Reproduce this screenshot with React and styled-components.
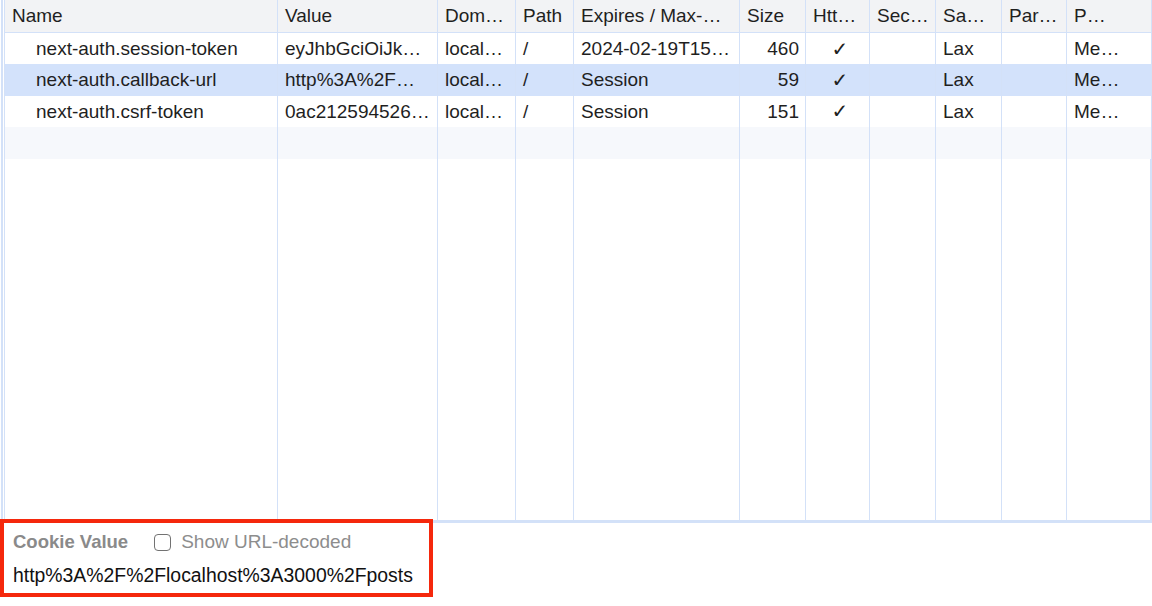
import React from "react"
import styled, { createGlobalStyle } from "styled-components"

const GlobalStyle = createGlobalStyle`
  html, body {
    margin: 0;
    padding: 0;
    background: #ffffff;
  }
  body {
    font-family: "Liberation Sans", Arial, "DejaVu Sans", sans-serif;
    color: #1f1f1f;
  }
`

const LINE = "#d3e1f8"

const Page = styled.div`
  width: 1152px;
  height: 606px;
  display: flex;
  flex-direction: column;
  overflow: hidden;
`

const GridArea = styled.div`
  height: 523px;
  box-sizing: border-box;
  margin-left: 1px;
  padding-left: 1px;
  border-left: 2px solid ${LINE};
  border-right: 2px solid ${LINE};
  border-bottom: 3px solid ${LINE};
  display: flex;
`

const Table = styled.table`
  width: 100%;
  height: 100%;
  table-layout: fixed;
  border-collapse: collapse;
  font-size: 19px;
`

const HeadCell = styled.th`
  height: 32px;
  padding: 0 4px 0 7px;
  background: #f2f3f5;
  border-left: 1px solid ${LINE};
  border-bottom: 1px solid ${LINE};
  font-weight: normal;
  text-align: left;
  white-space: nowrap;
  overflow: hidden;
  color: #1f1f1f;
`

const Row = styled.tr`
  height: 31.5px;
  background: ${p => (p.$selected ? "#d3e2fb" : p.$striped ? "#f6f8fc" : "#ffffff")};
`

const Cell = styled.td`
  padding: 1px ${p => (p.$align === "right" ? "6px" : "2px")} 0
    ${p => (p.$indent ? "31px" : "7px")};
  border-left: 1px solid ${LINE};
  text-align: ${p => p.$align || "left"};
  white-space: nowrap;
  overflow: hidden;
  line-height: 22px;
`

const Filler = styled.tr`
  height: auto;
  td {
    border-left: 1px solid ${LINE};
  }
`

const Check = styled.span`
  font-family: "DejaVu Sans", sans-serif;
  font-size: 20px;
  font-weight: bold;
`

const Panel = styled.div`
  position: relative;
  margin-top: -4px;
  width: 433px;
  height: 78px;
  box-sizing: border-box;
  border: 4px solid #f5280c;
  background: #ffffff;
  padding: 8px 0 0 9px;
  font-size: 18.5px;
  line-height: 22px;
`

const LabelRow = styled.div`
  display: flex;
  align-items: center;
  height: 22px;
`

const Label = styled.span`
  font-weight: bold;
  color: #8a8a8a;
`

const Box = styled.span`
  display: inline-block;
  width: 15px;
  height: 15px;
  margin-left: 26px;
  border: 1.6px solid #727272;
  border-radius: 4px;
`

const Decoded = styled.span`
  margin-left: 10px;
  font-size: 19px;
  color: #8d8d8d;
`

const Value = styled.div`
  margin-top: 11px;
  font-size: 19.4px;
  color: #111111;
`

const columns = [
  { title: "Name", width: 273 },
  { title: "Value", width: 160 },
  { title: "Dom…", width: 78 },
  { title: "Path", width: 58 },
  { title: "Expires / Max-…", width: 166 },
  { title: "Size", width: 66 },
  { title: "Htt…", width: 64 },
  { title: "Sec…", width: 66 },
  { title: "Sa…", width: 66 },
  { title: "Par…", width: 65 },
  { title: "P…", width: 84 },
]

const cookies = [
  { name: "next-auth.session-token", value: "eyJhbGciOiJk…", expires: "2024-02-19T15…", size: 460 },
  { name: "next-auth.callback-url", value: "http%3A%2F…", expires: "Session", size: 59, selected: true },
  { name: "next-auth.csrf-token", value: "0ac212594526…", expires: "Session", size: 151 },
]

const App = () => {
  return (
    <React.Fragment>
      <GlobalStyle />
      <Page>
        <GridArea>
          <Table>
            <colgroup>
              {columns.map(c => (
                <col key={c.title} style={{ width: c.width }} />
              ))}
            </colgroup>
            <thead>
              <tr>
                {columns.map(c => (
                  <HeadCell key={c.title}>{c.title}</HeadCell>
                ))}
              </tr>
            </thead>
            <tbody>
              {cookies.map(c => (
                <Row key={c.name} $selected={c.selected}>
                  <Cell $indent>{c.name}</Cell>
                  <Cell>{c.value}</Cell>
                  <Cell>local…</Cell>
                  <Cell>/</Cell>
                  <Cell>{c.expires}</Cell>
                  <Cell $align="right">{c.size}</Cell>
                  <Cell $align="center"><Check>✓</Check></Cell>
                  <Cell></Cell>
                  <Cell>Lax</Cell>
                  <Cell></Cell>
                  <Cell>Me…</Cell>
                </Row>
              ))}
              <Row $striped>
                {columns.map(c => (
                  <Cell key={c.title}></Cell>
                ))}
              </Row>
              <Filler>
                {columns.map(c => (
                  <td key={c.title}></td>
                ))}
              </Filler>
            </tbody>
          </Table>
        </GridArea>
        <Panel>
          <LabelRow>
            <Label>Cookie Value</Label>
            <Box />
            <Decoded>Show URL-decoded</Decoded>
          </LabelRow>
          <Value>http%3A%2F%2Flocalhost%3A3000%2Fposts</Value>
        </Panel>
      </Page>
    </React.Fragment>
  )
}

export default App
